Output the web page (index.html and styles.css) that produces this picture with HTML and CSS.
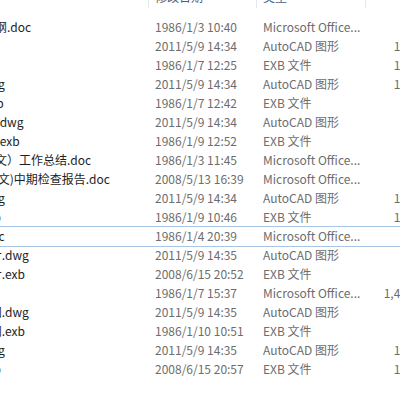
FILE: index.html
```html
<!DOCTYPE html>
<html lang="zh-CN">
<head>
<meta charset="utf-8">
<title>文件列表</title>
<link rel="stylesheet" href="styles.css">
</head>
<body>
<div class="pane">
  <div class="header">
    <div class="hcell name">名称</div>
    <div class="hcell date">修改日期</div>
    <div class="hcell type">类型</div>
    <div class="hcell size">大小</div>
  </div>
  <div class="rows">
    <div class="row"><div class="name">机械原理课程设计指导书及大纲.doc</div><div class="date">1986/1/3 10:40</div><div class="type">Microsoft Office...</div><div class="size">36 KB</div></div>
    <div class="row"><div class="name">减速器装配图.dwg</div><div class="date">2011/5/9 14:34</div><div class="type">AutoCAD 图形</div><div class="size">162 KB</div></div>
    <div class="row"><div class="name">减速器装配图.exb</div><div class="date">1986/1/7 12:25</div><div class="type">EXB 文件</div><div class="size">118 KB</div></div>
    <div class="row"><div class="name">圆柱齿轮减速器总装配图1.dwg</div><div class="date">2011/5/9 14:34</div><div class="type">AutoCAD 图形</div><div class="size">143 KB</div></div>
    <div class="row"><div class="name">圆柱齿轮减速器总装配图 1.exb</div><div class="date">1986/1/7 12:42</div><div class="type">EXB 文件</div><div class="size">75 KB</div></div>
    <div class="row"><div class="name">二级圆柱齿轮减速器装配图12.dwg</div><div class="date">2011/5/9 14:34</div><div class="type">AutoCAD 图形</div><div class="size">88 KB</div></div>
    <div class="row"><div class="name">二级圆柱齿轮减速器装配图12.exb</div><div class="date">1986/1/9 12:52</div><div class="type">EXB 文件</div><div class="size">64 KB</div></div>
    <div class="row"><div class="name">机电工程系本科毕业设计（论文）工作总结.doc</div><div class="date">1986/1/3 11:45</div><div class="type">Microsoft Office...</div><div class="size">27 KB</div></div>
    <div class="row"><div class="name">机电工程系本科毕业设计 （论文)中期检查报告.doc</div><div class="date">2008/5/13 16:39</div><div class="type">Microsoft Office...</div><div class="size">31 KB</div></div>
    <div class="row"><div class="name">齿轮减速器输出轴零件图2.dwg</div><div class="date">2011/5/9 14:34</div><div class="type">AutoCAD 图形</div><div class="size">127 KB</div></div>
    <div class="row"><div class="name">齿轮减速器输出轴零件图2.exb</div><div class="date">1986/1/9 10:46</div><div class="type">EXB 文件</div><div class="size">109 KB</div></div>
    <div class="row focused"><div class="name">机械设计课程设计说明书 1.doc</div><div class="date">1986/1/4 20:39</div><div class="type">Microsoft Office...</div><div class="size">45 KB</div></div>
    <div class="row"><div class="name">1号二级减速器低速轴课程设计.dwg</div><div class="date">2011/5/9 14:35</div><div class="type">AutoCAD 图形</div><div class="size">96 KB</div></div>
    <div class="row"><div class="name">1号二级减速器低速轴课程设计.exb</div><div class="date">2008/6/15 20:52</div><div class="type">EXB 文件</div><div class="size">58 KB</div></div>
    <div class="row"><div class="name">设计任务书.doc</div><div class="date">1986/1/7 15:37</div><div class="type">Microsoft Office...</div><div class="size">1,437 KB</div></div>
    <div class="row"><div class="name">2号二级圆柱减速器箱体零件图.dwg</div><div class="date">2011/5/9 14:35</div><div class="type">AutoCAD 图形</div><div class="size">82 KB</div></div>
    <div class="row"><div class="name">2号二级圆柱减速器箱体零件图.exb</div><div class="date">1986/1/10 10:51</div><div class="type">EXB 文件</div><div class="size">61 KB</div></div>
    <div class="row"><div class="name">齿轮减速器输入轴零件图3.dwg</div><div class="date">2011/5/9 14:35</div><div class="type">AutoCAD 图形</div><div class="size">115 KB</div></div>
    <div class="row"><div class="name">齿轮减速器输入轴零件图3.exb</div><div class="date">2008/6/15 20:57</div><div class="type">EXB 文件</div><div class="size">102 KB</div></div>
  </div>
</div>
</body>
</html>
```

FILE: styles.css
```css
html, body {
  margin: 0;
  padding: 0;
  background: #ffffff;
  overflow: hidden;
}

body {
  width: 400px;
  height: 400px;
  font-family: "Microsoft YaHei", "Noto Sans CJK SC", sans-serif;
  font-size: 12px;
}

.pane {
  margin: -14px 0 0 -161px;
  width: 620px;
}

.header,
.row {
  display: grid;
  grid-template-columns: 310px 108px 109px 74px;
  white-space: pre;
}

.header {
  height: 22px;
  line-height: 22px;
  color: #4c607a;
}

.hcell {
  border-right: 1px solid #e3e8ee;
  overflow: hidden;
}

.rows {
  padding-top: 9px;
}

.row {
  position: relative;
  height: 19px;
  line-height: 19px;
}

.row > div {
  overflow: hidden;
}

.name {
  padding-left: 0;
  color: #1e1e1e;
}

.date,
.type {
  padding-left: 6px;
  color: #6d6d6d;
}

.size {
  text-align: right;
  padding-right: 8px;
  color: #6d6d6d;
}

.header .date,
.header .type,
.header .size {
  color: #4c607a;
}

.focused::after {
  content: "";
  position: absolute;
  left: 0;
  right: 0;
  top: 0;
  height: 19px;
  border-top: 1px solid #a9c5e6;
  border-bottom: 1px solid #a9c5e6;
  pointer-events: none;
}
```
